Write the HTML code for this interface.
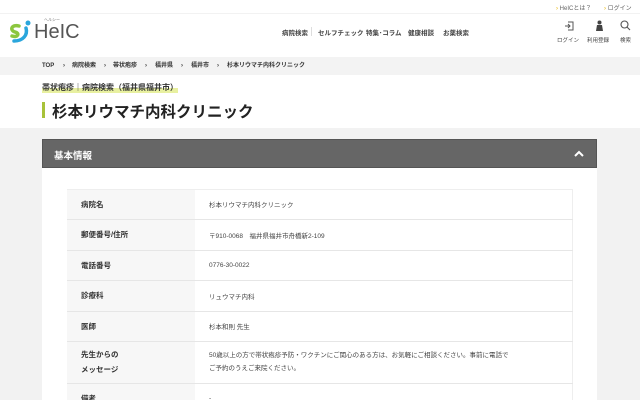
<!DOCTYPE html>
<html><head><meta charset="utf-8"><style>
*{margin:0;padding:0;box-sizing:border-box}
html,body{width:640px;height:400px;overflow:hidden}
body{background:#fff;font-family:"Liberation Sans","Noto Sans CJK JP",sans-serif;color:#333;position:relative}
.a{position:absolute;white-space:nowrap}
.top{top:3px;font-size:6px;color:#666}
.top b{color:#e8b400;font-weight:normal}
.nav{top:27px;font-size:6.5px;font-weight:bold;color:#444}
.ic{font-size:5.5px;color:#444;top:36px}
.bc{left:0;top:57px;width:640px;height:18px;background:#f3f3f3}
.bct{top:62px;font-size:6px;line-height:8px;height:8px;font-weight:bold;color:#333}
.gray{left:0;top:128px;width:640px;height:272px;background:#f2f2f2}
.box{left:42px;top:139px;width:555px;height:261px;background:#fff}
.hd{left:42px;top:139px;width:555px;height:29px;background:#666;border:1px solid #555;color:#fff;font-size:9.5px;font-weight:bold;padding:8px 0 0 11px}
table{position:absolute;left:67px;top:189px;width:506px;border-collapse:collapse;font-size:7px}
td{border-bottom:1px solid #e6e6e6;height:30.5px;vertical-align:middle}
td:first-child{width:128px;background:#f7f7f7;font-weight:bold;padding-left:14px;font-size:7.5px}
td:last-child{padding-left:14px;color:#444;font-size:6.5px;border-right:1px solid #eee}
</style></head><body>
<div class="a top" style="left:556px"><b>›</b> HeICとは？</div>
<div class="a top" style="left:604px"><b>›</b> ログイン</div>
<div class="a" style="left:0;top:13px;width:640px;height:1px;background:#f2f2f2"></div>
<svg class="a" style="left:8px;top:20px" width="24" height="24" viewBox="0 0 24 24">
<circle cx="20" cy="3" r="2.5" fill="#2aa6dc"/>
<path d="M11 6 C4 4 1 10 7 12 C12 13 10 18 4 16" stroke="#8cc63f" stroke-width="3.5" fill="none" stroke-linecap="round"/>
<path d="M18 8 C20 15 15 21 6 21" stroke="#2aa6dc" stroke-width="3.5" fill="none" stroke-linecap="round"/>
</svg>
<div class="a" style="left:34px;top:21px;font-size:20px;color:#555">HeIC</div>
<div class="a" style="left:44px;top:17px;font-size:4px;color:#777">ヘルシー</div>
<div class="a nav" style="left:282px">病院検索</div>
<div class="a" style="left:311px;top:27px;width:1px;height:9px;background:#ddd"></div>
<div class="a nav" style="left:318px">セルフチェック</div>
<div class="a nav" style="left:366px">特集･コラム</div>
<div class="a nav" style="left:408px">健康相談</div>
<div class="a nav" style="left:443px">お薬検索</div>
<svg class="a" style="left:564px;top:21px" width="10" height="10" viewBox="0 0 10 10" fill="none" stroke="#555" stroke-width="1"><path d="M4 1H9V9H4M1 5H6M4 3L6 5L4 7"/></svg>
<svg class="a" style="left:595px;top:20px" width="9" height="11" viewBox="0 0 9 11" fill="#444"><circle cx="4.5" cy="2.5" r="2"/><path d="M2 5H7L8 11H1Z"/></svg>
<svg class="a" style="left:620px;top:20px" width="11" height="11" viewBox="0 0 11 11" fill="none" stroke="#555" stroke-width="1.1"><circle cx="4.5" cy="4.5" r="3.5"/><path d="M7 7L10 10"/></svg>
<div class="a ic" style="left:557px">ログイン</div>
<div class="a ic" style="left:587px">利用登録</div>
<div class="a ic" style="left:620px">検索</div>
<div class="a bc"></div>
<div class="a bct" style="left:42px">TOP</div>
<div class="a bct" style="left:63px">›</div>
<div class="a bct" style="left:72px">病院検索</div>
<div class="a bct" style="left:104px">›</div>
<div class="a bct" style="left:113px">帯状疱疹</div>
<div class="a bct" style="left:145px">›</div>
<div class="a bct" style="left:155px">福井県</div>
<div class="a bct" style="left:181px">›</div>
<div class="a bct" style="left:191px">福井市</div>
<div class="a bct" style="left:217px">›</div>
<div class="a bct" style="left:227px">杉本リウマチ内科クリニック</div>
<div class="a" style="left:42px;top:82px;font-size:8px;font-weight:bold;color:#333;background:linear-gradient(transparent 55%,#e8f0a0 55%)">帯状疱疹｜病院検索（福井県福井市）</div>
<div class="a" style="left:42px;top:102px;width:3px;height:16px;background:#a8c23a"></div>
<div class="a" style="left:52px;top:100px;font-size:15.5px;font-weight:bold;color:#222">杉本リウマチ内科クリニック</div>
<div class="a gray"></div>
<div class="a box"></div>
<div class="a hd">基本情報</div>
<svg class="a" style="left:574px;top:150px" width="10" height="7" viewBox="0 0 10 7" fill="none" stroke="#fff" stroke-width="2"><path d="M1 6L5 2L9 6"/></svg>
<table>
<tr><td>病院名</td><td>杉本リウマチ内科クリニック</td></tr>
<tr><td>郵便番号/住所</td><td>〒910-0068　福井県福井市舟橋新2-109</td></tr>
<tr><td>電話番号</td><td>0776-30-0022</td></tr>
<tr><td>診療科</td><td>リュウマチ内科</td></tr>
<tr><td>医師</td><td>杉本和則 先生</td></tr>
<tr><td style="height:42px;line-height:1.9">先生からの<br>メッセージ</td><td style="line-height:1.9">50歳以上の方で帯状疱疹予防・ワクチンにご関心のある方は、お気軽にご相談ください。事前に電話で<br>ご予約のうえご来院ください。</td></tr>
<tr><td>備考</td><td>-</td></tr>
</table>
<div class="a" style="left:67px;top:189px;width:506px;height:1px;background:#eee"></div>
</body></html>
